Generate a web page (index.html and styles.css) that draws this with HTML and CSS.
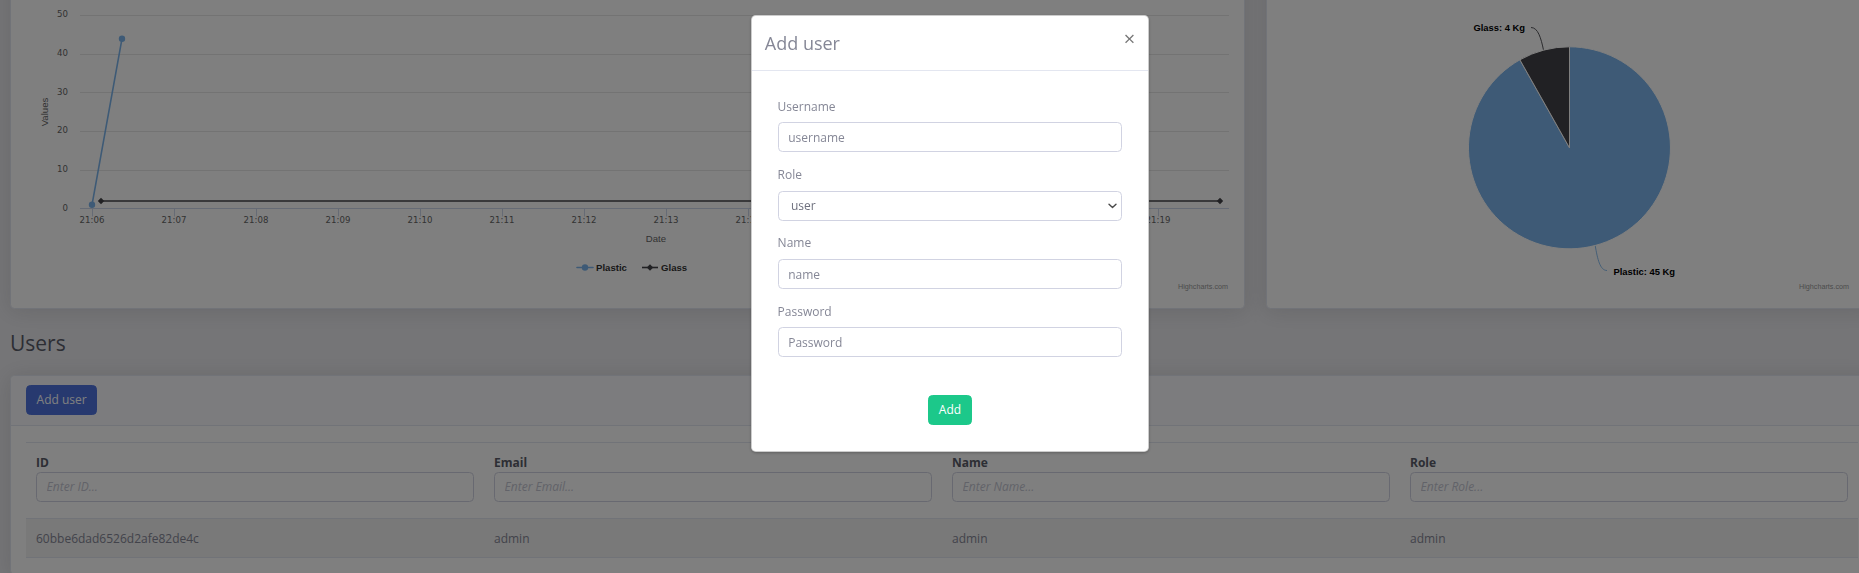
FILE: index.html
```html
<!DOCTYPE html>
<html lang="en">
<head>
<meta charset="utf-8">
<title>Dashboard - Users</title>
<link rel="stylesheet" href="styles.css">
</head>
<body>
<div class="page">
  <div class="charts">
    <div class="card chart-card">
      <svg class="chart chart-line" width="1233" height="337" viewBox="11 -29 1233 337">
        <g class="grid">
          <line x1="80" y1="15.5" x2="1229" y2="15.5"/>
          <line x1="80" y1="54.5" x2="1229" y2="54.5"/>
          <line x1="80" y1="92.5" x2="1229" y2="92.5"/>
          <line x1="80" y1="131.5" x2="1229" y2="131.5"/>
          <line x1="80" y1="170.5" x2="1229" y2="170.5"/>
        </g>
        <g class="axis">
          <line x1="80" y1="208.5" x2="1229" y2="208.5"/>
          <line x1="92.5" y1="208.5" x2="92.5" y2="216.5"/>
          <line x1="174.5" y1="208.5" x2="174.5" y2="216.5"/>
          <line x1="256.5" y1="208.5" x2="256.5" y2="216.5"/>
          <line x1="338.5" y1="208.5" x2="338.5" y2="216.5"/>
          <line x1="420.5" y1="208.5" x2="420.5" y2="216.5"/>
          <line x1="502.5" y1="208.5" x2="502.5" y2="216.5"/>
          <line x1="584.5" y1="208.5" x2="584.5" y2="216.5"/>
          <line x1="666.5" y1="208.5" x2="666.5" y2="216.5"/>
          <line x1="748.5" y1="208.5" x2="748.5" y2="216.5"/>
          <line x1="830.5" y1="208.5" x2="830.5" y2="216.5"/>
          <line x1="912.5" y1="208.5" x2="912.5" y2="216.5"/>
          <line x1="994.5" y1="208.5" x2="994.5" y2="216.5"/>
          <line x1="1076.5" y1="208.5" x2="1076.5" y2="216.5"/>
          <line x1="1158.5" y1="208.5" x2="1158.5" y2="216.5"/>
        </g>
        <g class="hc-label hc-yl">
          <text x="68" y="17.4">50</text>
          <text x="68" y="56">40</text>
          <text x="68" y="94.6">30</text>
          <text x="68" y="133.2">20</text>
          <text x="68" y="171.9">10</text>
          <text x="68" y="210.6">0</text>
        </g>
        <g class="hc-label hc-xl">
          <text x="92" y="222.7">21:06</text>
          <text x="174" y="222.7">21:07</text>
          <text x="256" y="222.7">21:08</text>
          <text x="338" y="222.7">21:09</text>
          <text x="420" y="222.7">21:10</text>
          <text x="502" y="222.7">21:11</text>
          <text x="584" y="222.7">21:12</text>
          <text x="666" y="222.7">21:13</text>
          <text x="748" y="222.7">21:14</text>
          <text x="830" y="222.7">21:15</text>
          <text x="912" y="222.7">21:16</text>
          <text x="994" y="222.7">21:17</text>
          <text x="1076" y="222.7">21:18</text>
          <text x="1158" y="222.7">21:19</text>
        </g>
        <text class="hc-title" transform="translate(47.5,112) rotate(-90)">Values</text>
        <text class="hc-title" x="656" y="242.2">Date</text>
        <polyline class="s-glass" points="101,201 1220,201"/>
        <path class="m-glass" d="M101 197.8 L104.2 201 L101 204.2 L97.8 201 Z"/>
        <path class="m-glass" d="M1220 197.8 L1223.2 201 L1220 204.2 L1216.8 201 Z"/>
        <polyline class="s-plastic" points="92,204.8 122,38.7"/>
        <circle class="m-plastic" cx="92" cy="204.8" r="3.2"/>
        <circle class="m-plastic" cx="122" cy="38.7" r="3.2"/>
        <g class="legend">
          <line class="s-plastic" x1="577" y1="267.5" x2="593" y2="267.5"/>
          <circle class="m-plastic" cx="585" cy="267.5" r="3.2"/>
          <text class="hc-legend" x="596" y="270.9">Plastic</text>
          <line class="s-glass" x1="642" y1="267.5" x2="658" y2="267.5"/>
          <path class="m-glass" d="M650 264.3 L653.2 267.5 L650 270.7 L646.8 267.5 Z"/>
          <text class="hc-legend" x="661" y="270.9">Glass</text>
        </g>
        <text class="hc-credits" x="1228" y="288.6">Highcharts.com</text>
      </svg>
    </div>
    <div class="card chart-card">
      <svg class="chart chart-pie" width="608" height="337" viewBox="1267 -29 608 337">
        <path class="conn-glass" d="M1531 27.5 C1538 27.5 1541 38 1543.6 50.5"/>
        <path class="conn-plastic" d="M1595.2 245.5 C1597.5 259 1600 270.5 1607 270.5"/>
        <path class="slice-plastic" d="M1569.5 147.8 L1569.5 46.8 A101 101 0 1 1 1519.9 59.8 Z"/>
        <path class="slice-glass" d="M1569.5 147.8 L1519.9 59.8 A101 101 0 0 1 1569.5 46.8 Z"/>
        <text class="hc-dl hc-end" x="1525" y="31.2">Glass: 4 Kg</text>
        <text class="hc-dl" x="1613.5" y="275.2">Plastic: 45 Kg</text>
        <text class="hc-credits" x="1849" y="288.6">Highcharts.com</text>
      </svg>
    </div>
  </div>

  <h3 class="section-title">Users</h3>

  <div class="card users-card">
    <div class="card-header">
      <button class="btn btn-primary" type="button">Add user</button>
    </div>
    <div class="card-body">
      <table class="table">
        <thead>
          <tr>
            <th><div class="th-label">ID</div><input class="filter" type="text" placeholder="Enter ID..."></th>
            <th><div class="th-label">Email</div><input class="filter" type="text" placeholder="Enter Email..."></th>
            <th><div class="th-label">Name</div><input class="filter" type="text" placeholder="Enter Name..."></th>
            <th><div class="th-label">Role</div><input class="filter" type="text" placeholder="Enter Role..."></th>
          </tr>
        </thead>
        <tbody>
          <tr class="odd">
            <td>60bbe6dad6526d2afe82de4c</td>
            <td>admin</td>
            <td>admin</td>
            <td>admin</td>
          </tr>
        </tbody>
      </table>
    </div>
  </div>
</div>

<div class="backdrop"></div>

<div class="modal">
  <div class="modal-header">
    <h4 class="modal-title">Add user</h4>
    <button class="close" type="button" aria-label="Close">×</button>
  </div>
  <div class="modal-body">
    <form class="user-form">
      <div class="form-group">
        <label class="form-label">Username</label>
        <input class="form-control" type="text" placeholder="username">
      </div>
      <div class="form-group">
        <label class="form-label">Role</label>
        <div class="select-wrap">
          <select class="form-control form-select">
            <option>user</option>
            <option>admin</option>
          </select>
          <svg class="select-arrow" width="9" height="6" viewBox="0 0 9 6"><path d="M1 1.2 L4.5 4.6 L8 1.2"/></svg>
        </div>
      </div>
      <div class="form-group">
        <label class="form-label">Name</label>
        <input class="form-control" type="text" placeholder="name">
      </div>
      <div class="form-group">
        <label class="form-label">Password</label>
        <input class="form-control" type="password" placeholder="Password">
      </div>
      <div class="form-actions">
        <button class="btn btn-success" type="button">Add</button>
      </div>
    </form>
  </div>
</div>
</body>
</html>
```

FILE: styles.css
```css
html, body {
  margin: 0;
  padding: 0;
  width: 1859px;
  height: 573px;
  overflow: hidden;
}

body {
  background: #ebebef;
  font-family: "Open Sans", "Noto Sans", sans-serif;
  font-size: 12px;
  line-height: 19.2px;
  color: #858796;
}

.page {
  width: 1866px;
  padding-left: 10px;
}

.charts {
  display: grid;
  grid-template-columns: 1235px 1fr;
  column-gap: 21px;
  margin-top: -30px;
}

.card {
  background: #fff;
  border: 1px solid #e3e6f0;
  border-radius: 4.5px;
  box-shadow: 0 2px 22px rgba(58, 59, 69, 0.15);
}

.chart-card {
  height: 339px;
  box-sizing: border-box;
  overflow: hidden;
}

.chart {
  display: block;
}

.grid line {
  stroke: #e6e6e6;
  stroke-width: 1;
}

.axis line {
  stroke: #ccd6eb;
  stroke-width: 1;
}

.hc-label {
  font-family: "DejaVu Sans", sans-serif;
  font-size: 8.6px;
  fill: #666666;
}

.hc-yl text {
  text-anchor: end;
}

.hc-xl text {
  text-anchor: middle;
}

.hc-title {
  font-family: "Liberation Sans", Arial, sans-serif;
  font-size: 9.6px;
  fill: #666666;
  text-anchor: middle;
}

.hc-legend {
  font-family: "Liberation Sans", Arial, sans-serif;
  font-size: 9.6px;
  font-weight: 700;
  fill: #333333;
}

.hc-credits {
  font-family: "Liberation Sans", Arial, sans-serif;
  font-size: 7.2px;
  fill: #999999;
  text-anchor: end;
}

.hc-dl {
  font-family: "Liberation Sans", Arial, sans-serif;
  font-size: 9.4px;
  font-weight: 700;
  fill: #000000;
}

.hc-end {
  text-anchor: end;
}

.s-plastic {
  fill: none;
  stroke: #7cb5ec;
  stroke-width: 1.6;
  stroke-linejoin: round;
  stroke-linecap: round;
}

.m-plastic {
  fill: #7cb5ec;
}

.s-glass {
  fill: none;
  stroke: #434348;
  stroke-width: 1.6;
}

.m-glass {
  fill: #434348;
}

.slice-plastic {
  fill: #7cb5ec;
  stroke: #ffffff;
  stroke-width: 1;
  stroke-linejoin: round;
}

.slice-glass {
  fill: #434348;
  stroke: #ffffff;
  stroke-width: 1;
  stroke-linejoin: round;
}

.conn-glass {
  fill: none;
  stroke: #434348;
  stroke-width: 0.9;
}

.conn-plastic {
  fill: none;
  stroke: #7cb5ec;
  stroke-width: 0.9;
}

.section-title {
  margin: 21.6px 0 19px;
  font-size: 21px;
  line-height: 25px;
  font-weight: 400;
  color: #5a5c69;
}

.card-header {
  background: #f8f9fc;
  border-bottom: 1px solid #e3e6f0;
  padding: 9px 15px 9.6px;
  border-radius: 4.5px 4.5px 0 0;
}

.btn {
  display: inline-block;
  font-family: "Open Sans", "Noto Sans", sans-serif;
  font-size: 12px;
  line-height: 19.2px;
  padding: 4.8px 9.6px;
  border: 1px solid transparent;
  border-radius: 4.5px;
  color: #fff;
  cursor: pointer;
}

.btn-primary {
  background: #4e73df;
  border-color: #4e73df;
}

.btn-success {
  background: #1cc88a;
  border-color: #1cc88a;
}

.card-body {
  padding: 16px 16px 16px 15px;
}

.table {
  width: 1832px;
  table-layout: fixed;
  border-collapse: collapse;
}

.table th,
.table td {
  padding: 9.6px 10px;
  text-align: left;
  vertical-align: top;
  border-top: 1px solid #e3e6f0;
}

.table th {
  padding-bottom: 9.8px;
}

.th-label {
  font-weight: 700;
  color: #5a5c69;
}

.filter {
  display: block;
  box-sizing: border-box;
  width: 100%;
  height: 30px;
  margin: 0 0 6.4px;
  padding: 0 9.6px;
  border: 1px solid #d1d3e2;
  border-radius: 4.5px;
  font-family: "Open Sans", "Noto Sans", sans-serif;
  font-size: 12px;
  font-style: italic;
  color: #6e707e;
  background: #fff;
}

.filter::placeholder {
  color: #c4c6d2;
  font-style: italic;
}

.table td {
  border-bottom: 1px solid #e3e6f0;
  color: #858796;
}

.table tr.odd td {
  background: rgba(0, 0, 0, 0.05);
}

.backdrop {
  position: fixed;
  inset: 0;
  background: rgba(0, 0, 0, 0.5);
}

.modal {
  position: fixed;
  left: 751px;
  top: 14.7px;
  width: 398px;
  box-sizing: border-box;
  background: #fff;
  border: 1px solid rgba(0, 0, 0, 0.2);
  border-radius: 4.8px;
  box-shadow: 0 1px 3px rgba(0, 0, 0, 0.25);
}

.modal-header {
  display: flex;
  align-items: flex-start;
  justify-content: space-between;
  padding: 13.6px 12.8px 12px;
  border-bottom: 1px solid #e3e6f0;
}

.modal-title {
  margin: 0;
  font-size: 18px;
  line-height: 28.8px;
  font-weight: 400;
  color: #858796;
}

.close {
  margin: -12.8px -12.8px -12.8px auto;
  padding: 12.8px 12.8px 12.8px 12.8px;
  background: transparent;
  border: 0;
  font-family: "Open Sans", "Noto Sans", sans-serif;
  font-size: 20px;
  font-weight: 400;
  line-height: 1;
  color: #000;
  opacity: 0.55;
}

.modal-body {
  padding: 12.8px;
}

.user-form {
  padding: 12.8px 12.8px 12.8px 12.8px;
}

.form-group {
  margin-bottom: 12.8px;
}

.form-label {
  display: block;
  margin-bottom: 6.4px;
  color: #858796;
}

.form-control {
  display: block;
  box-sizing: border-box;
  width: 100%;
  height: 30px;
  padding: 4.8px 9.6px;
  border: 1px solid #d1d3e2;
  border-radius: 4.5px;
  font-family: "Open Sans", "Noto Sans", sans-serif;
  font-size: 12px;
  line-height: 19.2px;
  color: #6e707e;
  background: #fff;
}

.form-control::placeholder {
  color: #858796;
}

.select-wrap {
  position: relative;
}

.form-select {
  appearance: none;
  -webkit-appearance: none;
  padding-left: 12.4px;
}

.select-arrow {
  position: absolute;
  right: 5.5px;
  top: 12.5px;
  fill: none;
  stroke: #4a4a4a;
  stroke-width: 1.4;
  stroke-linecap: round;
  stroke-linejoin: round;
}

.form-actions {
  padding-top: 24.4px;
  text-align: center;
}
```
